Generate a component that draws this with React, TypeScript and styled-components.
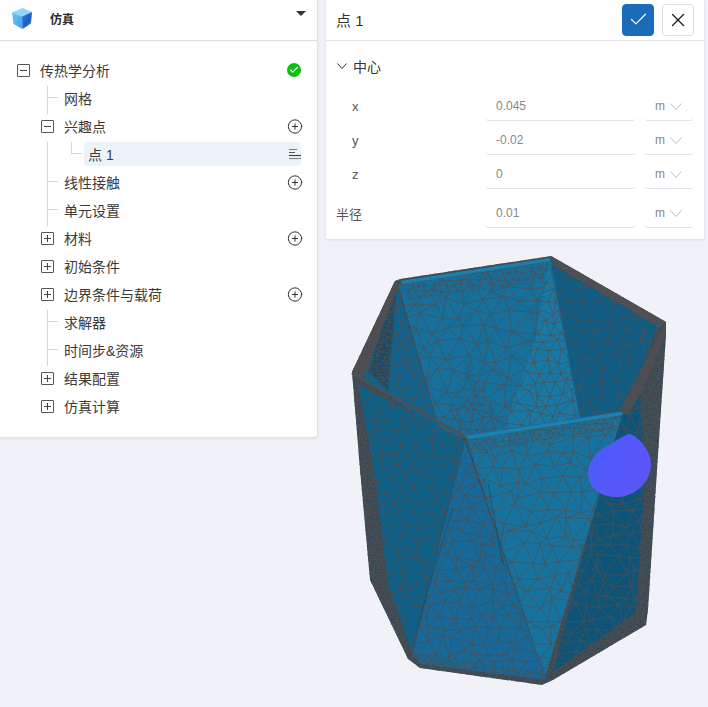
import React from 'react';
import styled, { createGlobalStyle } from 'styled-components';
import { Check, CirclePlus, X } from 'lucide-react';

const GlobalStyle = createGlobalStyle`
  html,
  body {
    margin: 0;
    height: 100%;
    background: #f0f2f7;
    overflow: hidden;
    font-family: 'Liberation Sans', 'Noto Sans CJK SC', sans-serif;
  }
`;

const Page = styled.div`
  display: flex;
  gap: 8px;
  width: 708px;
  height: 707px;
  overflow: hidden;
`;

const LeftColumn = styled.div`
  width: 318px;
  flex-shrink: 0;
  align-self: flex-start;
  background: #fff;
  border-right: 1px solid #dfe1e6;
  border-bottom: 1px solid #dfe1e6;
  border-bottom-right-radius: 4px;
  box-sizing: border-box;
  box-shadow: 0 1px 3px rgba(40, 50, 70, 0.08);
`;

const TreeHeader = styled.div`
  display: flex;
  align-items: center;
  height: 41px;
  box-sizing: border-box;
  padding: 0 11px 3px 11px;
  border-bottom: 1px solid #dcdcdc;
`;

const HeaderTitle = styled.span`
  flex: 1;
  margin-left: 17px;
  font-size: 12px;
  font-weight: 700;
  color: #2c2c2c;
`;

const HeaderCaret = styled.span`
  width: 0;
  height: 0;
  margin-bottom: 10px;
  border-left: 5px solid transparent;
  border-right: 5px solid transparent;
  border-top: 5px solid #333;
`;

const TreeBody = styled.div`
  padding: 15px 16px 17px 12px;
`;

const Row = styled.div`
  display: flex;
  align-items: center;
  height: 28px;
`;

type Guide = 'branch' | 'line' | 'elbow';

const Slot = styled.span<{ $guide?: Guide }>`
  position: relative;
  display: flex;
  align-items: center;
  justify-content: center;
  width: 24px;
  height: 28px;
  flex-shrink: 0;

  ${(p) =>
    (p.$guide === 'branch' || p.$guide === 'line') &&
    `
    &::before {
      content: '';
      position: absolute;
      left: 11px;
      top: 2px;
      width: 1px;
      height: 28px;
      background: #d8d8d8;
    }
  `}

  ${(p) =>
    p.$guide === 'branch' &&
    `
    &::after {
      content: '';
      position: absolute;
      left: 12px;
      top: 13px;
      width: 10px;
      height: 1px;
      background: #d8d8d8;
    }
  `}

  ${(p) =>
    p.$guide === 'elbow' &&
    `
    &::before {
      content: '';
      position: absolute;
      left: 11px;
      top: 2px;
      width: 10px;
      height: 11px;
      border-left: 1px solid #d8d8d8;
      border-bottom: 1px solid #d8d8d8;
    }
  `}
`;

const ToggleBox = styled.span`
  position: relative;
  width: 11px;
  height: 11px;
  margin-left: -1px;
  border: 1px solid #555;
  border-radius: 1px;
  background: #fff;
  z-index: 1;

  &::before {
    content: '';
    position: absolute;
    left: 2px;
    top: 5px;
    width: 7px;
    height: 1px;
    background: #444;
  }
`;

const PlusBox = styled(ToggleBox)`
  &::after {
    content: '';
    position: absolute;
    left: 5px;
    top: 2px;
    width: 1px;
    height: 7px;
    background: #444;
  }
`;

const Label = styled.div<{ $selected?: boolean }>`
  flex: 1;
  display: flex;
  align-items: center;
  justify-content: space-between;
  height: 24px;
  padding-left: 4px;
  border-radius: 4px;
  font-size: 14px;
  color: #3a3a3a;
  background: ${(p) => (p.$selected ? '#ebf3f9' : 'transparent')};
`;

const RowAction = styled.span`
  display: flex;
  align-items: center;
  justify-content: center;
  width: 16px;
  height: 16px;
  margin-right: -2px;
  color: #333;
`;

const StatusDot = styled.span`
  display: flex;
  align-items: center;
  justify-content: center;
  width: 14px;
  height: 14px;
  border-radius: 50%;
  background: #0ac20e;
`;

const RightColumn = styled.div`
  width: 378px;
  flex-shrink: 0;
  display: flex;
  flex-direction: column;
`;

const FormPanel = styled.div`
  height: 239px;
  box-sizing: border-box;
  background: #fff;
  box-shadow: 0 1px 2px rgba(40, 50, 70, 0.12);
`;

const FormHeader = styled.div`
  display: flex;
  align-items: center;
  gap: 8px;
  height: 41px;
  box-sizing: border-box;
  padding: 0 10px 1px;
  border-bottom: 1px solid #e2e4e8;
`;

const FormTitle = styled.span`
  flex: 1;
  font-size: 15px;
  color: #333;
`;

const IconButton = styled.button<{ $primary?: boolean }>`
  display: flex;
  align-items: center;
  justify-content: center;
  width: 32px;
  height: 32px;
  padding: 0;
  border-radius: 4px;
  border: 1px solid ${(p) => (p.$primary ? '#1a6bb8' : '#dcdee2')};
  background: ${(p) => (p.$primary ? '#1a6bb8' : '#fff')};
  color: ${(p) => (p.$primary ? '#fff' : '#222')};
`;

const FormBody = styled.div`
  padding: 12px 10px 0;
`;

const SectionTitle = styled.div`
  display: flex;
  align-items: center;
  gap: 6px;
  height: 26px;
  font-size: 14px;
  color: #333;
  padding-left: 1px;
`;

const FieldRow = styled.div<{ $nested?: boolean; $gap: number }>`
  display: grid;
  grid-template-columns: 1fr 151px 50px;
  column-gap: 8px;
  align-items: center;
  height: 29px;
  margin-top: ${(p) => p.$gap}px;
  padding-left: ${(p) => (p.$nested ? 16 : 0)}px;
`;

const FieldLabel = styled.span`
  font-size: 13px;
  color: #555;
`;

const Underlined = styled.div`
  display: flex;
  align-items: center;
  height: 29px;
  box-sizing: border-box;
  border-bottom: 1px solid #e2e4e8;
  border-radius: 0 0 4px 4px;
  font-size: 12px;
  color: #888;
`;

const ValueBox = styled(Underlined)`
  padding-left: 11px;
`;

const UnitBox = styled(Underlined)`
  gap: 5px;
  padding-left: 11px;
`;

const Viewer = styled.svg`
  display: block;
  width: 378px;
  height: 468px;
`;

const CubeLogo = () => (
  <svg width="22" height="23" viewBox="0 0 22 23">
    <defs>
      <linearGradient id="cubeLeft" x1="0" y1="0" x2="1" y2="1">
        <stop offset="0" stopColor="#6cc4f4" />
        <stop offset="1" stopColor="#3f9fe6" />
      </linearGradient>
      <linearGradient id="cubeRight" x1="0" y1="0" x2="1" y2="1">
        <stop offset="0" stopColor="#2a7fd6" />
        <stop offset="0.6" stopColor="#1c5cc0" />
        <stop offset="1" stopColor="#5aa8ea" />
      </linearGradient>
    </defs>
    <path d="M1 5.5 L11.5 1 L21 5 L11 9.5 Z" fill="#8fd6f8" />
    <path d="M1 5.5 L11 9.5 L11.5 22 L2.5 17 Z" fill="url(#cubeLeft)" />
    <path d="M11 9.5 L21 5 L20 16.5 L11.5 22 Z" fill="url(#cubeRight)" />
  </svg>
);

const ListIcon = () => (
  <svg width="14" height="12" viewBox="0 0 14 12">
    <path d="M1 1.5H9" stroke="#777" strokeWidth="1" />
    <path d="M1 4.5H7" stroke="#555" strokeWidth="1" />
    <path d="M1 7.5H13" stroke="#333" strokeWidth="1" />
    <path d="M1 10.5H13" stroke="#888" strokeWidth="1.2" />
  </svg>
);

const Chevron = ({ w, h, color }: { w: number; h: number; color: string }) => (
  <svg width={w} height={h} viewBox={`0 0 ${w} ${h}`}>
    <polyline points={`0.5,0.5 ${w / 2},${h - 0.5} ${w - 0.5},0.5`} fill="none" stroke={color} strokeWidth="1" />
  </svg>
);

type Pt = [number, number];

// jittered triangle grid, cut to each face by a clip path
const meshPath = (pts: Pt[], cell: number, seed: number) => {
  let s = seed;
  const rnd = () => {
    s = (s * 16807) % 2147483647;
    return s / 2147483647;
  };
  const xs = pts.map((p) => p[0]);
  const ys = pts.map((p) => p[1]);
  const x0 = Math.min(...xs) - cell;
  const y0 = Math.min(...ys) - cell;
  const cols = Math.ceil((Math.max(...xs) - x0) / cell) + 2;
  const rows = Math.ceil((Math.max(...ys) - y0) / (cell * 0.85)) + 2;
  const grid: Pt[][] = [];
  for (let r = 0; r < rows; r++) {
    const line: Pt[] = [];
    for (let c = 0; c < cols; c++) {
      line.push([
        x0 + c * cell + (r % 2 ? cell / 2 : 0) + (rnd() - 0.5) * cell * 0.7,
        y0 + r * cell * 0.85 + (rnd() - 0.5) * cell * 0.7,
      ]);
    }
    grid.push(line);
  }
  const seg = (a: Pt, b: Pt) => `M${a[0].toFixed(1)} ${a[1].toFixed(1)}L${b[0].toFixed(1)} ${b[1].toFixed(1)}`;
  let d = '';
  for (let r = 0; r < rows; r++) {
    for (let c = 0; c < cols; c++) {
      if (c + 1 < cols) d += seg(grid[r][c], grid[r][c + 1]);
      if (r + 1 < rows) {
        d += seg(grid[r][c], grid[r + 1][c]);
        const other = r % 2 ? c + 1 : c - 1;
        if (other >= 0 && other < cols) d += seg(grid[r][c], grid[r + 1][other]);
      }
    }
  }
  return d;
};

interface Face {
  pts: Pt[];
  fill: string;
  cell: number;
  width?: number;
}

const silhouette: Pt[] = [
  [352, 372], [395, 281], [400, 279], [551, 256], [666, 322], [666, 335], [657, 470], [648, 610],
  [646, 625], [553, 680], [542, 685], [420, 668], [408, 659], [370, 580], [360, 470],
];

const faces: Face[] = [
  // whole body first: the fine edge mesh shows through wherever no wall covers it
  { pts: silhouette, fill: '#24485a', cell: 3, width: 0.9 },
  // inside walls
  { pts: [[398, 284], [551, 260], [624, 414], [465, 438], [440, 432]], fill: '#146f9e', cell: 17 },
  { pts: [[397, 286], [440, 432], [362, 376]], fill: '#0f648f', cell: 11 },
  { pts: [[397, 286], [381, 330], [368, 372], [388, 390]], fill: '#0b4a6a', cell: 4 },
  { pts: [[549, 262], [580, 418], [503, 429], [535, 340]], fill: '#1879a8', cell: 12 },
  { pts: [[551, 264], [658, 326], [625, 410], [580, 418]], fill: '#0f5d85', cell: 16 },
  { pts: [[401, 284], [549, 262], [541, 282], [408, 300]], fill: '#146f9e', cell: 7 },
  { pts: [[440, 432], [470, 360], [503, 429], [465, 436]], fill: '#146f9e', cell: 9 },
  // outside walls
  { pts: [[358, 385], [465, 440], [412, 652], [388, 585], [374, 470]], fill: '#0f6087', cell: 14 },
  { pts: [[465, 440], [545, 678], [412, 656]], fill: '#12699a', cell: 14 },
  { pts: [[466, 438], [622, 415], [597, 503], [545, 678]], fill: '#1673a0', cell: 16 },
  { pts: [[466, 438], [622, 415], [620, 428], [472, 452]], fill: '#1673a0', cell: 6 },
  { pts: [[622, 415], [640, 395], [645, 480], [636, 612], [553, 672], [597, 503]], fill: '#0d5478', cell: 14 },
  { pts: [[412, 654], [545, 672], [545, 680], [420, 664]], fill: '#12699a', cell: 6 },
  // rim tops read as nearly solid grey
  { pts: [[352, 372], [395, 281], [398, 286], [366, 372], [360, 381]], fill: '#4f5154', cell: 2.6, width: 0.9 },
  { pts: [[666, 322], [666, 335], [640, 395], [628, 414], [618, 413]], fill: '#4f5154', cell: 2.6, width: 0.9 },
  { pts: [[551, 256], [666, 322], [660, 328], [552, 264]], fill: '#52585c', cell: 2.6, width: 0.9 },
];

const meshes = faces.map((f, i) => meshPath(f.pts, f.cell, 97 + i * 131));
const toPoints = (pts: Pt[]) => pts.map((p) => p.join(',')).join(' ');

const MeshModel = () => (
  <Viewer viewBox="326 239 378 468">
    <defs>
      {faces.map((f, i) => (
        <clipPath id={`face${i}`} key={i}>
          <polygon points={toPoints(f.pts)} />
        </clipPath>
      ))}
      <linearGradient id="probe" x1="0" y1="0.2" x2="1" y2="0.8">
        <stop offset="0" stopColor="#4a5cff" />
        <stop offset="1" stopColor="#5f55f5" />
      </linearGradient>
      <filter id="soft" x="-5%" y="-5%" width="110%" height="110%">
        <feGaussianBlur stdDeviation="0.3" />
      </filter>
    </defs>
    <g filter="url(#soft)">
      {faces.map((f, i) => (
        <g key={i} clipPath={`url(#face${i})`}>
          <polygon points={toPoints(f.pts)} fill={f.fill} />
          <path d={meshes[i]} stroke="#505052" strokeWidth={f.width ?? 0.75} fill="none" />
        </g>
      ))}
      {/* rims */}
      <polygon points="400,281 549,258 551,261 402,284" fill="#1a7fae" />
      <polygon points="465,436 622,412 623,415 469,439" fill="#1b82b2" />
      <polyline points="352,373 465,437" fill="none" stroke="#4d5154" strokeWidth="3" />
      <polyline points="360,378 462,438" fill="none" stroke="#1a6388" strokeWidth="1" />
      {/* seams on the front walls */}
      <polyline points="488,483 503,565" fill="none" stroke="#0c4a6a" strokeWidth="0.6" />
      <polyline points="453,507 417,627" fill="none" stroke="#0c4a6a" strokeWidth="0.5" />
      <path
        d="M630 434 C640 438 650 450 651 463 C652 480 636 497 617 497 C600 497 588 488 588 472 C589 460 598 450 609 445 C616 441 624 435 630 434 Z"
        fill="url(#probe)"
      />
    </g>
  </Viewer>
);

type TreeItem = {
  name: string;
  slots?: Guide[];
  toggle?: 'minus' | 'plus';
  guide?: Guide;
  action?: 'status' | 'add' | 'list';
  selected?: boolean;
  nested?: boolean;
};

const tree: TreeItem[] = [
  { name: '传热学分析', toggle: 'minus', action: 'status' },
  { name: '网格', nested: true, guide: 'branch' },
  { name: '兴趣点', nested: true, toggle: 'minus', action: 'add' },
  { name: '点 1', slots: ['line', 'elbow'], action: 'list', selected: true },
  { name: '线性接触', nested: true, guide: 'branch', action: 'add' },
  { name: '单元设置', nested: true, guide: 'branch' },
  { name: '材料', nested: true, toggle: 'plus', action: 'add' },
  { name: '初始条件', nested: true, toggle: 'plus' },
  { name: '边界条件与载荷', nested: true, toggle: 'plus', action: 'add' },
  { name: '求解器', nested: true, guide: 'branch' },
  { name: '时间步&资源', nested: true, guide: 'branch' },
  { name: '结果配置', nested: true, toggle: 'plus' },
  { name: '仿真计算', nested: true, toggle: 'plus' },
];

const fields = [
  { label: 'x', value: '0.045', nested: true, gap: 13 },
  { label: 'y', value: '-0.02', nested: true, gap: 5 },
  { label: 'z', value: '0', nested: true, gap: 5 },
  { label: '半径', value: '0.01', nested: false, gap: 10 },
];

const App: React.FC = () => (
  <Page>
    <GlobalStyle />
    <LeftColumn>
      <TreeHeader>
        <CubeLogo />
        <HeaderTitle>仿真</HeaderTitle>
        <HeaderCaret />
      </TreeHeader>
      <TreeBody>
        {tree.map((item) => (
          <Row key={item.name}>
            {(item.nested || item.slots) && <Slot />}
            {item.slots ? (
              item.slots.map((g) => <Slot key={g} $guide={g} />)
            ) : (
              <Slot $guide={item.guide}>
                {item.toggle === 'minus' && <ToggleBox />}
                {item.toggle === 'plus' && <PlusBox />}
              </Slot>
            )}
            <Label $selected={item.selected}>
              <span>{item.name}</span>
              {item.action === 'status' && (
                <StatusDot>
                  <Check size={10} color="#fff" strokeWidth={3} />
                </StatusDot>
              )}
              {item.action === 'add' && (
                <RowAction>
                  <CirclePlus size={17} strokeWidth={1.5} />
                </RowAction>
              )}
              {item.action === 'list' && (
                <RowAction>
                  <ListIcon />
                </RowAction>
              )}
            </Label>
          </Row>
        ))}
      </TreeBody>
    </LeftColumn>
    <RightColumn>
      <FormPanel>
        <FormHeader>
          <FormTitle>点 1</FormTitle>
          <IconButton $primary>
            <Check size={21} strokeWidth={1.4} />
          </IconButton>
          <IconButton>
            <X size={22} strokeWidth={1.5} />
          </IconButton>
        </FormHeader>
        <FormBody>
          <SectionTitle>
            <Chevron w={10} h={6} color="#333" />
            中心
          </SectionTitle>
          {fields.map((f) => (
            <FieldRow key={f.label} $nested={f.nested} $gap={f.gap}>
              <FieldLabel>{f.label}</FieldLabel>
              <ValueBox>{f.value}</ValueBox>
              <UnitBox>
                m
                <Chevron w={12} h={7} color="#bdbdbd" />
              </UnitBox>
            </FieldRow>
          ))}
        </FormBody>
      </FormPanel>
      <MeshModel />
    </RightColumn>
  </Page>
);

export default App;
